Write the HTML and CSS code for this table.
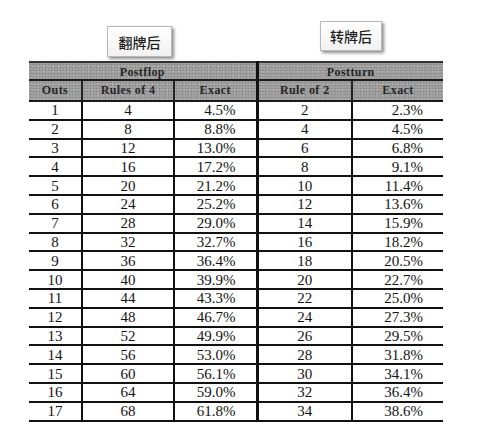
FILE: index.html
```html
<!DOCTYPE html>
<html lang="zh">
<head>
<meta charset="utf-8">
<link rel="stylesheet" href="styles.css">
</head>
<body>
<div class="page">
  <div class="labels">
    <div class="tag tag-flop">翻牌后</div>
    <div class="tag tag-turn">转牌后</div>
  </div>
  <table class="odds">
    <colgroup>
      <col class="c-outs"><col class="c-r4"><col class="c-ex1"><col class="c-r2"><col class="c-ex2">
    </colgroup>
    <thead>
      <tr class="h1">
        <th colspan="3" class="split">Postflop</th>
        <th colspan="2">Postturn</th>
      </tr>
      <tr class="h2">
        <th>Outs</th><th>Rules of 4</th><th class="split">Exact</th><th>Rule of 2</th><th>Exact</th>
      </tr>
    </thead>
    <tbody>
      <tr><td>1</td><td>4</td><td class="ex split">4.5%</td><td>2</td><td class="ex">2.3%</td></tr>
      <tr><td>2</td><td>8</td><td class="ex split">8.8%</td><td>4</td><td class="ex">4.5%</td></tr>
      <tr><td>3</td><td>12</td><td class="ex split">13.0%</td><td>6</td><td class="ex">6.8%</td></tr>
      <tr><td>4</td><td>16</td><td class="ex split">17.2%</td><td>8</td><td class="ex">9.1%</td></tr>
      <tr><td>5</td><td>20</td><td class="ex split">21.2%</td><td>10</td><td class="ex">11.4%</td></tr>
      <tr><td>6</td><td>24</td><td class="ex split">25.2%</td><td>12</td><td class="ex">13.6%</td></tr>
      <tr><td>7</td><td>28</td><td class="ex split">29.0%</td><td>14</td><td class="ex">15.9%</td></tr>
      <tr><td>8</td><td>32</td><td class="ex split">32.7%</td><td>16</td><td class="ex">18.2%</td></tr>
      <tr><td>9</td><td>36</td><td class="ex split">36.4%</td><td>18</td><td class="ex">20.5%</td></tr>
      <tr><td>10</td><td>40</td><td class="ex split">39.9%</td><td>20</td><td class="ex">22.7%</td></tr>
      <tr><td>11</td><td>44</td><td class="ex split">43.3%</td><td>22</td><td class="ex">25.0%</td></tr>
      <tr><td>12</td><td>48</td><td class="ex split">46.7%</td><td>24</td><td class="ex">27.3%</td></tr>
      <tr><td>13</td><td>52</td><td class="ex split">49.9%</td><td>26</td><td class="ex">29.5%</td></tr>
      <tr><td>14</td><td>56</td><td class="ex split">53.0%</td><td>28</td><td class="ex">31.8%</td></tr>
      <tr><td>15</td><td>60</td><td class="ex split">56.1%</td><td>30</td><td class="ex">34.1%</td></tr>
      <tr><td>16</td><td>64</td><td class="ex split">59.0%</td><td>32</td><td class="ex">36.4%</td></tr>
      <tr><td>17</td><td>68</td><td class="ex split">61.8%</td><td>34</td><td class="ex">38.6%</td></tr>
    </tbody>
  </table>
</div>
</body>
</html>
```
FILE: styles.css
```css
html, body {
  margin: 0;
  padding: 0;
  background: #ffffff;
}
.page {
  width: 491px;
  height: 440px;
  overflow: hidden;
}
.labels {
  display: flex;
  align-items: flex-start;
  height: 61px;
}
.tag {
  box-sizing: border-box;
  display: flex;
  align-items: center;
  justify-content: center;
  border: 1px solid #b9b9b9;
  background: linear-gradient(#ffffff, #f1f1f1);
  box-shadow: 2px 2px 3px rgba(0, 0, 0, 0.45);
  font-family: "Noto Sans CJK SC", "Noto Sans", sans-serif;
  font-size: 14px;
  font-weight: 500;
  color: #1e1e1e;
}
.tag-flop {
  width: 65px;
  height: 31px;
  margin-left: 107px;
  margin-top: 26px;
}
.tag-turn {
  width: 62px;
  height: 30px;
  margin-left: 148px;
  margin-top: 21px;
}
.odds {
  margin-left: 29px;
  width: 414px;
  border-collapse: collapse;
  table-layout: fixed;
  font-family: "Liberation Serif", "Times New Roman", serif;
  color: #141414;
}
.c-outs { width: 53px; }
.c-r4 { width: 92px; }
.c-ex1 { width: 83px; }
.c-r2 { width: 95px; }
.c-ex2 { width: 91px; }
.odds th {
  padding: 0;
  font-weight: bold;
  font-size: 12px;
  letter-spacing: 0.4px;
  color: #262626;
  text-align: center;
  background-color: #a2a2a2;
  background-image:
    radial-gradient(circle, rgba(90, 90, 90, 0.45) 0.7px, transparent 1.1px),
    radial-gradient(circle, rgba(215, 215, 215, 0.5) 0.7px, transparent 1.1px);
  background-size: 3px 3px, 5px 5px;
  background-position: 0 0, 2px 1px;
  border-left: 2px solid #222;
  border-right: 2px solid #222;
  border-bottom: 2px solid #1a1a1a;
}
.odds tr > :first-child { border-left: none; }
.odds tr > :last-child { border-right: none; }
.h1 th {
  height: 16px;
  line-height: 14px;
  vertical-align: bottom;
  border-top: 2px solid #333;
}
.h2 th {
  height: 19px;
  line-height: 19px;
}
.odds th.split, .odds td.split {
  border-right: 3px solid #111;
}
.odds td {
  height: 16.8px;
  padding: 0;
  font-size: 15px;
  line-height: 16px;
  text-align: center;
  border-left: 2px solid #111;
  border-right: 2px solid #111;
  border-bottom: 2px solid #111;
}
.odds td.ex {
  text-align: right;
  padding-right: 20px;
}
```
